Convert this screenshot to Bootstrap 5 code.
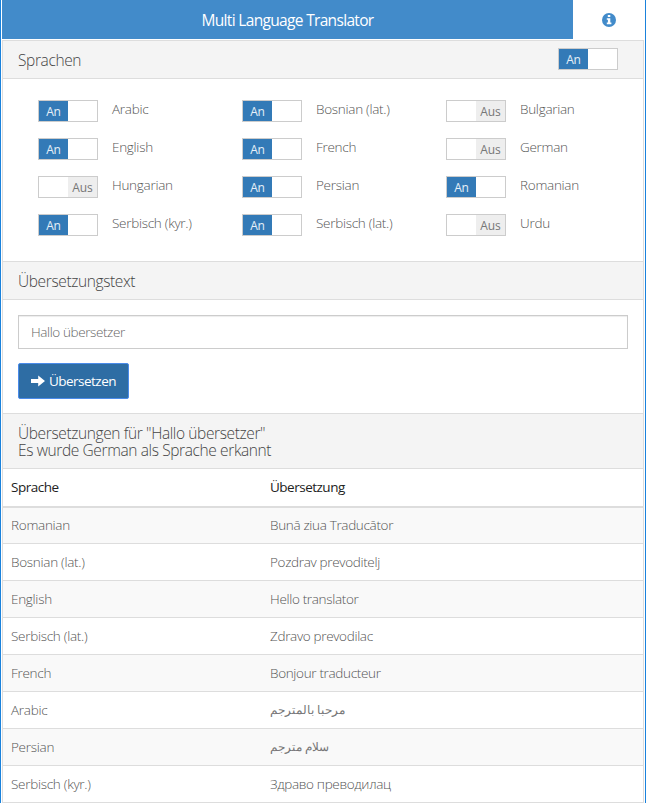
<!DOCTYPE html>
<html lang="de">
<head>
<meta charset="utf-8">
<meta name="viewport" content="width=device-width, initial-scale=1">
<title>Multi Language Translator</title>
<link href="https://cdn.jsdelivr.net/npm/bootstrap@5.3.0/dist/css/bootstrap.min.css" rel="stylesheet">
<style>
body{font-family:"Open Sans","Noto Sans","DejaVu Sans",sans-serif;font-size:13.5px;font-weight:300;line-height:20px;color:#555;letter-spacing:-.28px;height:803px;overflow:hidden;border-left:1px solid #1a82dc;border-right:1px solid #1a82dc;padding:0 1px;background:#fff}
.topbar{height:39px;margin-bottom:1px}
.app-title{background:#428bca;color:#fff;font-size:15.5px;font-weight:400;width:571px;letter-spacing:-.67px}
.info-link{color:#428bca}
.panel{border:1px solid #ddd;border-bottom:0;height:763px}
.panel-head{background:#f4f4f4;border-bottom:1px solid #ddd;height:38px;padding:0 25px 0 15px;font-size:15.5px;line-height:17px;color:#444;letter-spacing:-.38px}
.panel-head .toggle{margin-top:-2px}
.panel-head span,.panel-head .summary{padding-top:2px}
.panel-head.ruled{border-top:1px solid #ddd;height:39px}
.panel-head.result{height:56px}
.langs{height:182px;padding:21px 0 0 35px}
.langs .lang{width:204px;height:38px;gap:14px}
.lang span.name{line-height:18px}
.toggle{width:60px;height:22px;border:1px solid #ccc;background:#fff;font-size:12px;font-weight:400;line-height:22px;text-align:center;letter-spacing:-.1px}
.toggle .on{width:29px;background:#337ab7;color:#e6f0f8}
.toggle .off{width:29px;background:#eee;color:#777}
.form-area{height:113px;padding:15px}
.form-area .form-control{height:34px;font-size:13.5px;font-weight:300;border-color:#ccc;color:#666;letter-spacing:-.4px;box-shadow:inset 0 1px 1px rgba(0,0,0,.075)}
.btn-go{width:111px;height:36px;margin:14px 0 0 0;background:#2e6da4;border:1px solid #4a8bea;border-radius:2px;color:#fff;font-size:13.5px;letter-spacing:-.52px;line-height:20px}
.btn-go:hover{background:#286090;color:#fff}
.results{table-layout:fixed;color:#555}
.results th,.results td{height:37px;padding:0 8px 1px!important;vertical-align:middle;border-bottom:1px solid #ddd;line-height:20px;color:#555!important}
.results th{height:37.5px;font-weight:400;color:#222!important;border-bottom:2px solid #ddd}
.results th{letter-spacing:-.5px}
.results td+td{letter-spacing:-.33px}
.results td>span{font-size:12.4px;color:#777;letter-spacing:0}
.results th:first-child{width:259px}
.results tbody tr:nth-child(odd) td{background:#f9f9f9;box-shadow:none}
</style>
<script src="https://cdn.jsdelivr.net/npm/bootstrap@5.3.0/dist/js/bootstrap.bundle.min.js"></script>
</head>
<body>
<header class="topbar d-flex">
  <div class="app-title d-flex align-items-center justify-content-center">Multi Language Translator</div>
  <a class="info-link flex-grow-1 d-flex align-items-center justify-content-center" href="#" aria-label="Info"><svg width="14" height="14" viewBox="0 0 14 14"><circle cx="7" cy="7" r="7" fill="currentColor"/><path fill="#fff" d="M5.8 2h2.5v2H5.8zM4.8 5.2h3.5v4.4h1.1v1.7H4.8V9.6h1.1V6.8H4.8z"/></svg></a>
</header>
<main class="panel">
  <div class="panel-head d-flex justify-content-between align-items-center"><span>Sprachen</span><div class="toggle d-flex"><div class="on">An</div></div></div>
  <div class="langs d-flex flex-wrap align-content-start">
    <div class="lang d-flex"><div class="toggle d-flex"><div class="on">An</div></div><span class="name">Arabic</span></div>
    <div class="lang d-flex"><div class="toggle d-flex"><div class="on">An</div></div><span class="name">Bosnian (lat.)</span></div>
    <div class="lang d-flex w-auto"><div class="toggle d-flex justify-content-end"><div class="off">Aus</div></div><span class="name">Bulgarian</span></div>
    <div class="w-100"></div>
    <div class="lang d-flex"><div class="toggle d-flex"><div class="on">An</div></div><span class="name">English</span></div>
    <div class="lang d-flex"><div class="toggle d-flex"><div class="on">An</div></div><span class="name">French</span></div>
    <div class="lang d-flex w-auto"><div class="toggle d-flex justify-content-end"><div class="off">Aus</div></div><span class="name">German</span></div>
    <div class="w-100"></div>
    <div class="lang d-flex"><div class="toggle d-flex justify-content-end"><div class="off">Aus</div></div><span class="name">Hungarian</span></div>
    <div class="lang d-flex"><div class="toggle d-flex"><div class="on">An</div></div><span class="name">Persian</span></div>
    <div class="lang d-flex w-auto"><div class="toggle d-flex"><div class="on">An</div></div><span class="name">Romanian</span></div>
    <div class="w-100"></div>
    <div class="lang d-flex"><div class="toggle d-flex"><div class="on">An</div></div><span class="name">Serbisch (kyr.)</span></div>
    <div class="lang d-flex"><div class="toggle d-flex"><div class="on">An</div></div><span class="name">Serbisch (lat.)</span></div>
    <div class="lang d-flex w-auto"><div class="toggle d-flex justify-content-end"><div class="off">Aus</div></div><span class="name">Urdu</span></div>
  </div>
  <div class="panel-head ruled d-flex align-items-center"><span>Übersetzungstext</span></div>
  <div class="form-area">
    <input class="form-control rounded-0" type="text" value="Hallo übersetzer" aria-label="Übersetzungstext">
    <button class="btn btn-go p-0 d-flex align-items-center justify-content-center gap-1" type="button"><svg width="14" height="12" viewBox="0 0 14 12"><path fill="currentColor" d="M0 4h7.2V.4L14 6l-6.8 5.6V8H0z"/></svg><span>Übersetzen</span></button>
  </div>
  <div class="panel-head ruled result d-flex align-items-center"><div class="summary"><div>Übersetzungen für "Hallo übersetzer"</div><div>Es wurde German als Sprache erkannt</div></div></div>
  <table class="table results mb-0">
    <thead><tr><th>Sprache</th><th>Übersetzung</th></tr></thead>
    <tbody>
      <tr><td>Romanian</td><td>Bună ziua Traducător</td></tr>
      <tr><td>Bosnian (lat.)</td><td>Pozdrav prevoditelj</td></tr>
      <tr><td>English</td><td>Hello translator</td></tr>
      <tr><td>Serbisch (lat.)</td><td>Zdravo prevodilac</td></tr>
      <tr><td>French</td><td>Bonjour traducteur</td></tr>
      <tr><td>Arabic</td><td><span lang="ar">مرحبا بالمترجم</span></td></tr>
      <tr><td>Persian</td><td><span lang="fa">سلام مترجم</span></td></tr>
      <tr><td>Serbisch (kyr.)</td><td>Здраво преводилац</td></tr>
    </tbody>
  </table>
</main>
</body>
</html>
